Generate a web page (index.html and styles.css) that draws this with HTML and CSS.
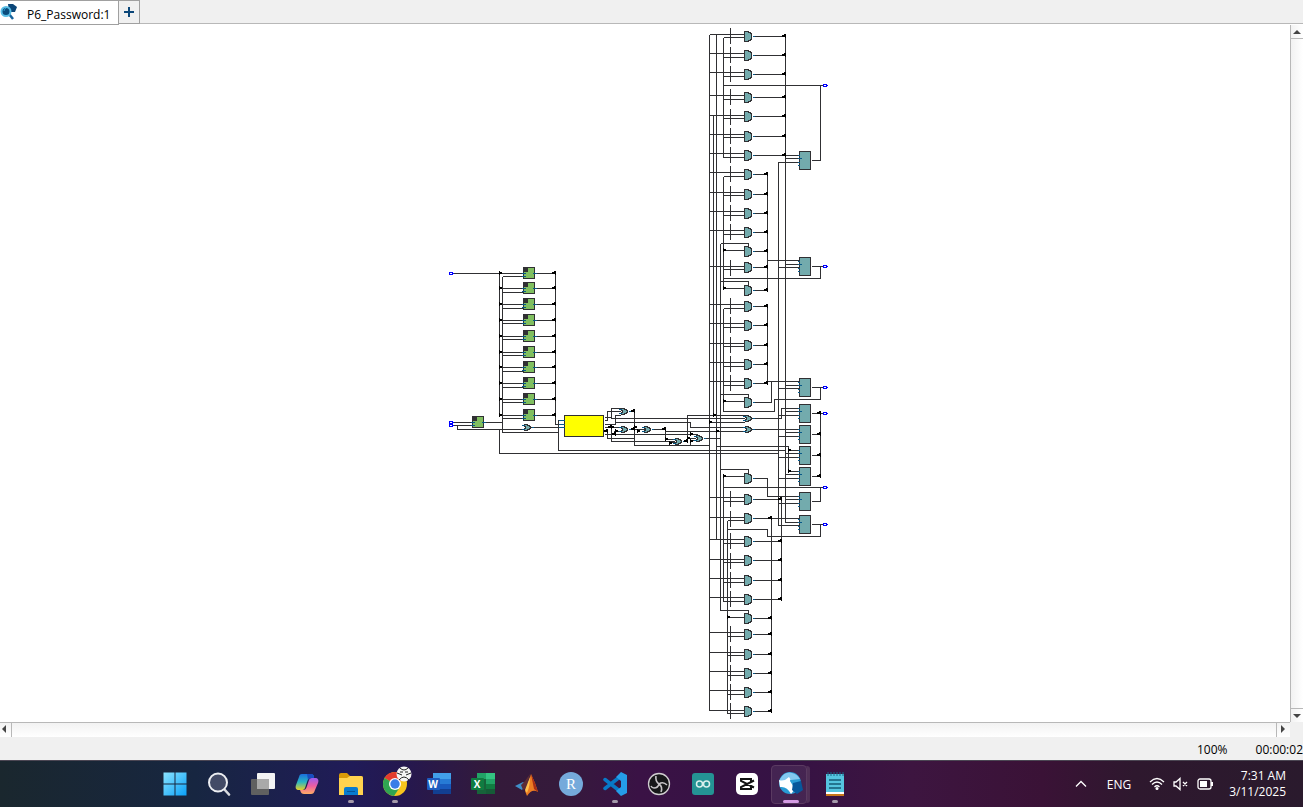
FILE: index.html
```html
<!DOCTYPE html>
<html lang="en">
<head>
<meta charset="utf-8">
<title>P6_Password:1</title>
<link rel="stylesheet" href="styles.css">
</head>
<body>
<header class="tabs">
  <button class="tab">
    <svg class="tab-icon" width="17" height="18" viewBox="0 0 17 18"><path d="M8 1h5l4 3-2 5H9z" fill="#0b4779"/><path d="M9 11l4 5" stroke="#16639d" stroke-width="2.5"/><circle cx="6" cy="8.500" r="4.500" fill="#0a4c7c" stroke="#58bde5" stroke-width="2"/><path d="M4 8q0-2 2-3" stroke="#2d9bd0" fill="none"/></svg>
    <span>P6_Password:1</span>
  </button>
  <button class="add" aria-label="New tab"><svg width="12" height="12" viewBox="0 0 12 12"><path d="M6 1v10M1 6h10" stroke="#0b4779" stroke-width="2"/></svg></button>
</header>
<main class="view">
  <div class="canvas">
    <svg class="schematic" viewBox="0 25 1290 697" role="img" aria-label="Circuit netlist">
      <defs>
        <g id="and"><path class="part" d="M0-5H4V-4H6V-3H7V3H6V4H4V5H0Z"/><path class="pin" d="M8 0h2"/></g>
        <g id="or"><path class="part" d="M1-3H4V-2H6V-1H7V1H6V2H4V3H1V1H2V-1H1Z"/><path class="pin" d="M-2-2h3M-2 2h3M8 0h2"/></g>
        <g id="reg"><path class="flop" d="M0-6H11V5H0Z"/><path class="corner" d="M0-6h4v4h-4z"/><path class="pin" d="M-2 0h4M-2 3h4M9 0h4"/></g>
        <g id="mux"><path class="part" d="M0-9H11V9H0Z"/><path class="pin" d="M-2-5h2M-2-2h4M-2 2h2M-2 5h2"/></g>
        <path id="end" d="M-3-1h2v-1h2v4h-1v-1h-3z"/>
        <path id="start" d="M0-2h1v1h2v2h-2v1h-1z"/>
        <path id="dash" class="wire" d="M0-9V7"/>
        <path id="port" class="port" d="M0-1H3V1H0ZM3 0H4"/>
      </defs>
      <g transform="translate(.5 .5)">
        <g class="wire">
          <path d="M453 273H523M499 271V415M502 276V432H558M502 276H523M499 288H523M502 292H523M499 304H523M502 308H523M499 320H523M502 323H523M499 336H523M502 339H523M499 352H523M502 355H523M499 367H523M502 371H523M499 383H523M502 387H523M499 399H523M502 402H523M499 415H523M502 418H523"/>
          <path d="M535 273H555M535 288H555M535 304H555M535 320H555M535 336H555M535 352H555M535 367H555M535 383H555M535 399H555M535 415H555M555 273V424H564"/>
          <path d="M453 422H472M453 425H472M457 425V429H523M484 422H502M499 429V453H778M530 427H564M564 420H558V450H785"/>
          <path d="M604 417H611V408H620M604 420H607V411H620M611 417V418H744M604 424H615V415H620M615 422H690V427H744M604 427H620M604 430H607V438H634M611 427V441H674M604 434H697M614 434V431H620"/>
          <path d="M628 411H634V445H709M630 429H644M653 429H665V439H674M665 431H744M669 445V442H676M684 441H687V415H744M690 445V440H697M687 438H695M705 438H720"/>
          <path d="M709 34V710M713 115V415M716 34V539M720 243V610H748V613M720 243H748V247M720 281H748V286M720 394H748V398M720 469H748V474"/>
          <path d="M709 34H744M709 53H744M709 72H744M709 95H744M709 115H744M709 134H744M709 153H744M709 172H744M709 192H744M709 211H744M709 230H744M709 266H744M709 304H744M709 323H744M709 343H744M709 362H744M709 381H744M709 422H744M709 497H744M709 517H744M709 539H744M709 559H744M709 578H744M709 597H744M709 632H744M709 652H744M709 671H744M709 690H744M709 710H744"/>
          <path d="M723 37V157M723 37H744M723 57H744M723 76H744M723 99H744M723 118H744M723 137H744M723 157H744"/>
          <path d="M723 176V289M723 176H744M723 195H744M723 215H744M723 234H744M723 250H744M723 269H744M723 288H744"/>
          <path d="M723 308V411H774V399H820V387M723 308H744M723 327H744M723 346H744M723 366H744M723 385H744M723 401H744"/>
          <path d="M723 476V601M723 476H744M723 501H744M723 543H744M723 562H744M723 582H744M723 601H744"/>
          <path d="M727 520V713M727 520H744M727 617H744M727 636H744M727 655H744M727 675H744M727 694H744M727 713H744"/>
          <path d="M752 36H785M752 55H785M752 74H785M752 97H785M752 116H785M752 136H785M752 155H799M785 36V522H799"/>
          <path d="M752 174H767M752 194H767M752 213H767M752 232H767M752 251H767M752 267H767M752 290H767V174M767 260H799"/>
          <path d="M752 306H767M752 325H767M752 345H767M752 364H767M752 383H767V306M767 381H799M752 402H771V381"/>
          <path d="M751 418H781V408H799M751 429H799M716 446H788V471H799M788 450H799M752 478H767V496H799"/>
          <path d="M752 499H781V599H752M752 541H781M752 560H781M752 580H781M752 518H799M771 518V711H752M752 618H771M752 634H771M752 654H771M752 673H771M752 692H771"/>
          <path d="M785 158H799M785 264H799M785 385H799M785 411H799M785 432H799M785 453H799M785 474H799M785 499H799M799 162H778V525H799M778 267H799M778 388H799M778 415H799M778 436H799M778 457H799M778 478H799M778 503H799"/>
          <path d="M811 160H820V85M723 85H823M811 266H823M820 266V278H723M811 387H823M811 413H823M820 413V476H811M811 434H820M811 455H820M811 501H820V487M723 487H823M811 524H823M820 524V536H767V529H727"/>
        </g>
        <g>
          <use href="#dash" x="730" y="36"/><use href="#dash" x="730" y="55"/><use href="#dash" x="730" y="74"/><use href="#dash" x="730" y="97"/><use href="#dash" x="730" y="117"/><use href="#dash" x="730" y="136"/><use href="#dash" x="730" y="155"/><use href="#dash" x="730" y="174"/><use href="#dash" x="730" y="194"/><use href="#dash" x="730" y="213"/><use href="#dash" x="730" y="232"/><use href="#dash" x="730" y="268"/><use href="#dash" x="730" y="306"/><use href="#dash" x="730" y="325"/><use href="#dash" x="730" y="345"/><use href="#dash" x="730" y="364"/><use href="#dash" x="730" y="383"/><use href="#dash" x="730" y="499"/><use href="#dash" x="730" y="519"/><use href="#dash" x="730" y="541"/><use href="#dash" x="730" y="561"/><use href="#dash" x="730" y="580"/><use href="#dash" x="730" y="599"/><use href="#dash" x="730" y="634"/><use href="#dash" x="730" y="654"/><use href="#dash" x="730" y="673"/><use href="#dash" x="730" y="692"/><use href="#dash" x="730" y="711"/>
        </g>
        <g>
          <use href="#and" x="744" y="36"/><use href="#and" x="744" y="55"/><use href="#and" x="744" y="74"/><use href="#and" x="744" y="97"/><use href="#and" x="744" y="116"/><use href="#and" x="744" y="136"/><use href="#and" x="744" y="155"/><use href="#and" x="744" y="174"/><use href="#and" x="744" y="194"/><use href="#and" x="744" y="213"/><use href="#and" x="744" y="232"/><use href="#and" x="744" y="251"/><use href="#and" x="744" y="267"/><use href="#and" x="744" y="290"/><use href="#and" x="744" y="306"/><use href="#and" x="744" y="325"/><use href="#and" x="744" y="345"/><use href="#and" x="744" y="364"/><use href="#and" x="744" y="383"/><use href="#and" x="744" y="402"/><use href="#and" x="744" y="478"/><use href="#and" x="744" y="499"/><use href="#and" x="744" y="518"/><use href="#and" x="744" y="541"/><use href="#and" x="744" y="560"/><use href="#and" x="744" y="580"/><use href="#and" x="744" y="599"/><use href="#and" x="744" y="618"/><use href="#and" x="744" y="634"/><use href="#and" x="744" y="654"/><use href="#and" x="744" y="673"/><use href="#and" x="744" y="692"/><use href="#and" x="744" y="711"/>
          <use href="#or" x="744" y="418"/><use href="#or" x="744" y="429"/><use href="#or" x="523" y="427"/><use href="#or" x="620" y="411"/><use href="#or" x="620" y="429"/><use href="#or" x="643" y="429"/><use href="#or" x="674" y="441"/><use href="#or" x="695" y="438"/>
        </g>
        <g>
          <use href="#reg" x="523" y="273"/><use href="#reg" x="523" y="288"/><use href="#reg" x="523" y="304"/><use href="#reg" x="523" y="320"/><use href="#reg" x="523" y="336"/><use href="#reg" x="523" y="352"/><use href="#reg" x="523" y="367"/><use href="#reg" x="523" y="383"/><use href="#reg" x="523" y="399"/><use href="#reg" x="523" y="415"/><use href="#reg" x="472" y="422"/>
          <path class="block" d="M564 415H603V436H564Z"/><path class="pin" d="M558 420h6M558 424h6M558 427h6"/>
          <use href="#mux" x="799" y="160"/><use href="#mux" x="799" y="266"/><use href="#mux" x="799" y="387"/><use href="#mux" x="799" y="413"/><use href="#mux" x="799" y="434"/><use href="#mux" x="799" y="455"/><use href="#mux" x="799" y="476"/><use href="#mux" x="799" y="501"/><use href="#mux" x="799" y="524"/>
        </g>
        <g>
          <use href="#port" x="449" y="273"/><use href="#port" x="449" y="422"/><use href="#port" x="449" y="425"/><use href="#port" x="823" y="85"/><use href="#port" x="823" y="266"/><use href="#port" x="823" y="387"/><use href="#port" x="823" y="413"/><use href="#port" x="823" y="487"/><use href="#port" x="823" y="524"/>
        </g>
      </g>
      <g class="joint">
        <use href="#end" x="785" y="36"/><use href="#end" x="785" y="55"/><use href="#end" x="785" y="74"/><use href="#end" x="785" y="97"/><use href="#end" x="785" y="116"/><use href="#end" x="785" y="136"/><use href="#end" x="785" y="155"/>
        <use href="#end" x="767" y="174"/><use href="#end" x="767" y="194"/><use href="#end" x="767" y="213"/><use href="#end" x="767" y="232"/><use href="#end" x="767" y="251"/><use href="#end" x="767" y="267"/><use href="#end" x="767" y="290"/><use href="#end" x="767" y="306"/><use href="#end" x="767" y="325"/><use href="#end" x="767" y="345"/><use href="#end" x="767" y="364"/><use href="#end" x="767" y="383"/>
        <use href="#end" x="781" y="499"/><use href="#end" x="781" y="541"/><use href="#end" x="781" y="560"/><use href="#end" x="781" y="580"/><use href="#end" x="781" y="599"/>
        <use href="#end" x="771" y="518"/><use href="#end" x="771" y="618"/><use href="#end" x="771" y="634"/><use href="#end" x="771" y="654"/><use href="#end" x="771" y="673"/><use href="#end" x="771" y="692"/><use href="#end" x="771" y="711"/>
        <use href="#end" x="820" y="413"/><use href="#end" x="820" y="434"/><use href="#end" x="820" y="455"/><use href="#end" x="820" y="476"/>
        <use href="#end" x="555" y="273"/><use href="#end" x="555" y="288"/><use href="#end" x="555" y="304"/><use href="#end" x="555" y="320"/><use href="#end" x="555" y="336"/><use href="#end" x="555" y="352"/><use href="#end" x="555" y="367"/><use href="#end" x="555" y="383"/><use href="#end" x="555" y="399"/><use href="#end" x="555" y="415"/>
        <use href="#start" x="499" y="273"/><use href="#start" x="499" y="288"/><use href="#start" x="499" y="304"/><use href="#start" x="499" y="320"/><use href="#start" x="499" y="336"/><use href="#start" x="499" y="352"/><use href="#start" x="499" y="367"/><use href="#start" x="499" y="383"/><use href="#start" x="499" y="399"/><use href="#start" x="499" y="415"/>
        <use href="#start" x="723" y="250"/><use href="#start" x="723" y="288"/><use href="#start" x="723" y="401"/><use href="#start" x="723" y="476"/><use href="#start" x="727" y="617"/><use href="#start" x="709" y="422"/><use href="#start" x="713" y="415"/><use href="#start" x="716" y="431"/><use href="#start" x="788" y="450"/><use href="#start" x="788" y="471"/>
        <use href="#end" x="634" y="411"/><use href="#end" x="634" y="429"/><use href="#start" x="634" y="427"/><use href="#start" x="637" y="431"/><use href="#end" x="665" y="429"/><use href="#start" x="665" y="439"/><use href="#start" x="669" y="443"/><use href="#end" x="687" y="441"/><use href="#start" x="687" y="438"/><use href="#start" x="690" y="434"/><use href="#start" x="690" y="441"/><use href="#start" x="611" y="427"/><use href="#end" x="611" y="427"/><use href="#start" x="615" y="431"/><use href="#end" x="615" y="434"/><use href="#end" x="607" y="431"/>
      </g>
    </svg>
  </div>
  <div class="vbar">
    <button class="step" aria-label="Scroll up"><svg width="8" height="4" viewBox="0 0 8 4"><path d="M0 4l4-4 4 4z"/></svg></button>
    <button class="step" aria-label="Scroll down"><svg width="8" height="4" viewBox="0 0 8 4"><path d="M0 0l4 4 4-4z"/></svg></button>
  </div>
  <div class="hbar">
    <button class="step" aria-label="Scroll left"><svg width="4" height="8" viewBox="0 0 4 8"><path d="M4 0L0 4l4 4z"/></svg></button>
    <button class="step" aria-label="Scroll right"><svg width="4" height="8" viewBox="0 0 4 8"><path d="M0 0l4 4-4 4z"/></svg></button>
  </div>
</main>
<footer class="status"><span>100%</span><span>00:00:02</span></footer>
<nav class="taskbar">
  <div class="apps">
    <button class="app" aria-label="Start"><svg viewBox="0 0 24 24"><defs><linearGradient id="win" x2="1" y2="1"><stop stop-color="#8be4ff"/><stop offset="1" stop-color="#0aa0f7"/></linearGradient></defs><path fill="url(#win)" d="M.500.500h11v11h-11zM12.500.500h11v11h-11zM.500 12.500h11v11h-11zM12.500 12.500h11v11h-11z"/></svg></button>
    <button class="app" aria-label="Search"><svg viewBox="0 0 24 24"><path d="M17 17l5 5.500" stroke="#d8dadf" stroke-width="2.600" stroke-linecap="round"/><circle cx="11" cy="10.500" r="9" fill="#424a66" stroke="#eceef2" stroke-width="2"/></svg></button>
    <button class="app" aria-label="Task view"><svg viewBox="0 0 24 24"><rect x="6" y="1" width="18" height="16" rx="1" fill="#f3f3f3"/><rect y="7" width="18" height="16" rx="1" fill="#606060"/><path d="M6 7h12v10H6z" fill="#a9a9a9"/></svg></button>
    <button class="app" aria-label="Copilot"><svg viewBox="0 0 24 24"><defs><linearGradient id="cpa" x2="0" y2="1"><stop stop-color="#1b6fdd"/><stop offset=".5" stop-color="#27b5c4"/><stop offset="1" stop-color="#e7cf25"/></linearGradient><linearGradient id="cpb" x2="0" y2="1"><stop stop-color="#9b5df0"/><stop offset=".5" stop-color="#ee5da0"/><stop offset="1" stop-color="#ffad64"/></linearGradient></defs><path d="M7 2h9c2 0 3 1 3 4h-3c-2 0-3 1-4 4l-2 6c-1 2-2 2-4 2H4c-3 0-4-2-3-5l3-8c.5-2 1-3 3-3z" fill="url(#cpa)"/><path d="M12 2h4c2 0 3 1 3 4h-3c-2 0-3 1-3 2z" fill="#184dc0"/><path d="M17 6h3c3 0 4 2 3 5l-3 7c-1 3-2 4-4 4H9c-2 0-3-1-4-4h3c2 0 3-1 4-4l2-6c.5-1 1-2 3-2z" fill="url(#cpb)"/></svg></button>
    <button class="app open" aria-label="File Explorer"><svg viewBox="0 0 24 24"><path d="M0 3q0-2 2-2h6l3 3h11q2 0 2 2v5H0z" fill="#d99a07"/><path d="M0 6h8l3-2h11q2 0 2 2v17H0z" fill="#ffd34f"/><path d="M5 17q0-2 2-2h10q2 0 2 2v6H5z" fill="#087bd0"/><path d="M8 19h8v1H8z" fill="#075499"/></svg></button>
    <button class="app open" aria-label="Chrome"><svg class="chrome" viewBox="0 0 30 30"><circle cx="13" cy="18" r="12" fill="#f9c51d"/><path d="M13 18L2.600 12A12 12 0 0 1 23.400 12z" fill="#e33b2e"/><path d="M2.600 12A12 12 0 0 0 12 30L18 21 13 18z" fill="#30a552"/><circle cx="13" cy="18" r="6" fill="#fff"/><circle cx="13" cy="18" r="4.700" fill="#397de8"/><circle cx="22" cy="8" r="7.500" fill="#f5f5f5"/><path d="M18 2q4 4 8 0M15 7l5 2M29 7l-5 2M17 14q5-6 10 0M18 6h3M23 6h3" fill="none" stroke="#222"/></svg></button>
    <button class="app" aria-label="Word"><svg viewBox="0 0 24 24"><path d="M6 1h18v6H6z" fill="#42a0ea"/><path d="M6 7h18v5H6z" fill="#277bd5"/><path d="M6 12h18v5H6z" fill="#195abd"/><path d="M6 17h18v5H6z" fill="#123f91"/><rect y="6" width="13" height="12" rx="1" fill="#1d5cc0"/><text class="office" x="6" y="16">W</text></svg></button>
    <button class="app" aria-label="Excel"><svg viewBox="0 0 24 24"><path d="M6 1h9v6H6z" fill="#21a366"/><path d="M15 1h9v6h-9z" fill="#33c481"/><path d="M6 7h9v15H6z" fill="#17633a"/><path d="M15 7h9v5h-9z" fill="#21a366"/><path d="M15 12h9v5h-9z" fill="#107c41"/><path d="M15 17h9v5h-9z" fill="#155b37"/><rect y="6" width="13" height="12" rx="1" fill="#107c41"/><text class="office" x="6" y="16">X</text></svg></button>
    <button class="app" aria-label="MATLAB"><svg viewBox="0 0 24 24"><path d="M0 14l8-4 4 2-5 6z" fill="#3f8fc9"/><path d="M6 13l4-4 5-7-3 14-4 2z" fill="#5c2c36"/><path d="M10 19q2-3 6-17 4 8 7 18-6-4-11 4z" fill="#ec7c23"/><path d="M16 2q4 8 7 18l-4-3z" fill="#a92e16"/><path d="M15 5q0 9-3 16l-2-3z" fill="#ffc04e"/></svg></button>
    <button class="app" aria-label="RStudio"><svg viewBox="0 0 24 24"><circle cx="12" cy="12" r="12" fill="#75aadb"/><text class="serif" x="12" y="17">R</text></svg></button>
    <button class="app open" aria-label="Visual Studio Code"><svg viewBox="0 0 24 24"><path d="M2 7.500L18 20M2 16.500L18 4" stroke="#0879c8" stroke-width="3.500" stroke-linecap="round"/><path d="M18 0l6 3v18l-6 3-5-5 5-4V9l-5-4z" fill="#259ce8"/></svg></button>
    <button class="app" aria-label="OBS Studio"><svg viewBox="0 0 24 24"><circle cx="12" cy="12" r="10.500" fill="#171719" stroke="#d0cdd0" stroke-width="1.300"/><path d="M9 4q-1 5 3 8 4-3 8 1M12 12q-1 4-5 4-2 0-3-2M12 12q4 3 2 8" fill="none" stroke="#c7c4c7" stroke-width="1.600"/></svg></button>
    <button class="app" aria-label="Arduino"><svg viewBox="0 0 24 24"><rect x="1" y="1" width="22" height="22" rx="3" fill="#249394"/><circle cx="8.500" cy="12" r="3" fill="none" stroke="#d8f0ed" stroke-width="1.500"/><circle cx="15.500" cy="12" r="3" fill="none" stroke="#d8f0ed" stroke-width="1.500"/></svg></button>
    <button class="app" aria-label="CapCut"><svg viewBox="0 0 24 24"><rect x="1" y="1" width="22" height="22" rx="5" fill="#fff"/><path d="M19 8.500L6 15v2h10v-2.500M19 15.500L6 9V7h10v2.500" fill="none" stroke="#111" stroke-width="2"/></svg></button>
    <button class="app current" aria-label="Quartus"><svg viewBox="0 0 24 24"><circle cx="11" cy="11" r="11" fill="#299bd4"/><path d="M1 7Q6-1 13 1q5 1 8 6L12 8 0 10z" fill="#83c9f0"/><path d="M0 8q5 2 10-3 2 2 1 4l5 8-4 5Q8 14 1 15z" fill="#fff"/><path d="M14 11l8-2 2 9-6 4-5-4z" fill="#07579b"/></svg></button>
    <button class="app open" aria-label="Notepad"><svg viewBox="0 0 24 24"><path d="M3 2h18v19H3z" fill="#55c4df"/><path d="M3 20h18v2H3z" fill="#fff"/><path d="M3 22h18v2H3z" fill="#c8761a"/><path d="M5 0v4M8 0v4M11 0v4M14 0v4M17 0v4M20 0v4" stroke="#196987"/><path d="M6 8h12M6 12h12M6 16h12" stroke="#145977" stroke-width="1.500"/></svg></button>
  </div>
  <div class="tray">
    <button aria-label="Show hidden icons"><svg width="12" height="8" viewBox="0 0 12 8"><path class="line" d="M1 6.500l5-5 5 5"/></svg></button>
    <button class="lang">ENG</button>
    <button class="quick" aria-label="Network, volume, battery">
      <svg width="16" height="14" viewBox="0 0 16 14"><path class="line" d="M1 5q7-7 14 0M3 7.500q5-5 10 0M5.500 10q2.500-2.500 5 0"/><circle cx="8" cy="11.500" r="1.500" fill="#fff"/></svg>
      <svg width="16" height="14" viewBox="0 0 16 14"><path class="line" d="M1 5h2l4-3.500v11L3 9H1zM10 5l4 4M14 5l-4 4"/></svg>
      <svg width="16" height="14" viewBox="0 0 16 14"><rect class="line" x="1" y="2" width="13" height="10" rx="2"/><path d="M3 4h7v6H3zM14 5h2v4h-2z" fill="#fff"/></svg>
    </button>
    <button class="clock"><span>7:31 AM</span><span>3/11/2025</span></button>
  </div>
</nav>
</body>
</html>
```
FILE: styles.css
```css
* { box-sizing: border-box; }
body {
  margin: 0;
  height: 100vh;
  display: flex;
  flex-direction: column;
  background: #f0f0f0;
  color: #000;
  font: 12px/16px "Open Sans", "Noto Sans", sans-serif;
}
button {
  margin: 0;
  padding: 0;
  border: 0;
  background: none;
  color: inherit;
  font: inherit;
}
svg { display: block; flex: none; }

.tabs {
  display: flex;
  align-items: flex-start;
  height: 25px;
  flex: none;
  background: linear-gradient(#f0f0f0 23px, #b8b8b8 23px, #b8b8b8 24px, #fff 24px);
}
.tab {
  display: flex;
  align-items: center;
  gap: 10px;
  height: 25px;
  padding: 0 8px 0 0;
  background: #fff;
  border: 1px solid #a0a0a0;
  border-left: 0;
}
.tab span { padding-top: 5px; }
.tab-icon { margin-bottom: 2px; }
.add {
  display: grid;
  place-items: center;
  width: 21px;
  height: 24px;
  border: 1px solid #a0a0a0;
  border-left: 0;
}

.view {
  flex: 1;
  min-height: 0;
  display: grid;
  grid-template: minmax(0, 1fr) 15px / minmax(0, 1fr) 13px;
}
.canvas { background: #fff; min-height: 0; }
.schematic {
  width: 100%;
  height: 100%;
  shape-rendering: crispEdges;
}
.wire { fill: none; stroke: #303033; }
.part { fill: #73abad; stroke: #303033; }
.flop { fill: #80bf60; stroke: #303033; }
.block { fill: #ff0; stroke: #303033; }
.corner { fill: #303033; }
.pin { fill: none; stroke: #075888; }
.port { fill: #fff; stroke: #00f; }
.joint { fill: #000; }

.vbar, .hbar {
  display: flex;
  justify-content: space-between;
}
.vbar {
  flex-direction: column;
  border-left: 1px solid #b8b8b8;
  background: linear-gradient(90deg, #f2f2f2, #fff);
}
.hbar {
  border-top: 1px solid #b8b8b8;
  background: linear-gradient(#f2f2f2, #fff);
}
.step { display: grid; place-items: center; fill: #444; }
.vbar .step { height: 14px; }
.vbar .step:first-child { border-bottom: 1px solid #b8b8b8; }
.vbar .step:last-child { border-top: 1px solid #b8b8b8; }
.hbar .step { width: 12px; padding-bottom: 2px; }
.hbar .step:first-child { border-right: 1px solid #b8b8b8; padding-right: 3px; }
.hbar .step:last-child { width: 14px; border-left: 1px solid #b8b8b8; padding-right: 2px; }

.status {
  display: flex;
  justify-content: flex-end;
  align-items: center;
  gap: 28px;
  height: 23px;
  flex: none;
  padding-top: 3px;
}

.taskbar {
  display: flex;
  align-items: stretch;
  height: 47px;
  flex: none;
  padding: 0 17px 0 153px;
  border-top: 1px solid #4b4653;
  background: linear-gradient(90deg, #1a272e 0%, #172641 15%, #201b58 27%, #25184f 31%, #341a3a 38%, #351a3b 43%, #3a1245 49%, #351244 60%, #3d1540 70%, #3a1236 80%, #2e182e 87%, #2a1a2d 100%);
  color: #fff;
}
.apps { display: flex; }
.app {
  position: relative;
  display: grid;
  place-items: center;
  width: 44px;
}
.app svg { width: 24px; height: 24px; }
.app .chrome { width: 30px; height: 30px; margin: 0 0 6px 4px; }
.open::after, .current::after {
  content: "";
  position: absolute;
  bottom: 4px;
  left: 19px;
  width: 6px;
  height: 3px;
  border-radius: 2px;
  background: #a49aaa;
}
.current::before {
  content: "";
  position: absolute;
  inset: 4px 6px 3px 2px;
  border: 1px solid #5a3a61;
  border-radius: 4px;
  background: #ffffff14;
  box-shadow: 4px 0 0 -1px #503057;
}
.current svg { position: relative; }
.current::after { left: 14px; width: 16px; background: #d59be4; }
.office { fill: #fff; font: bold 10px "Open Sans", sans-serif; text-anchor: middle; }
.serif { fill: #fff; font: 15px "Liberation Serif", serif; text-anchor: middle; }

.tray {
  display: flex;
  align-items: center;
  margin-left: auto;
  gap: 20px;
}
.line { fill: none; stroke: #fff; stroke-width: 1.3; }
.lang { padding-top: 2px; }
.quick { display: flex; gap: 8px; margin: 0 -4px 0 -2px; }
.clock {
  display: flex;
  flex-direction: column;
  align-items: flex-end;
}
```
